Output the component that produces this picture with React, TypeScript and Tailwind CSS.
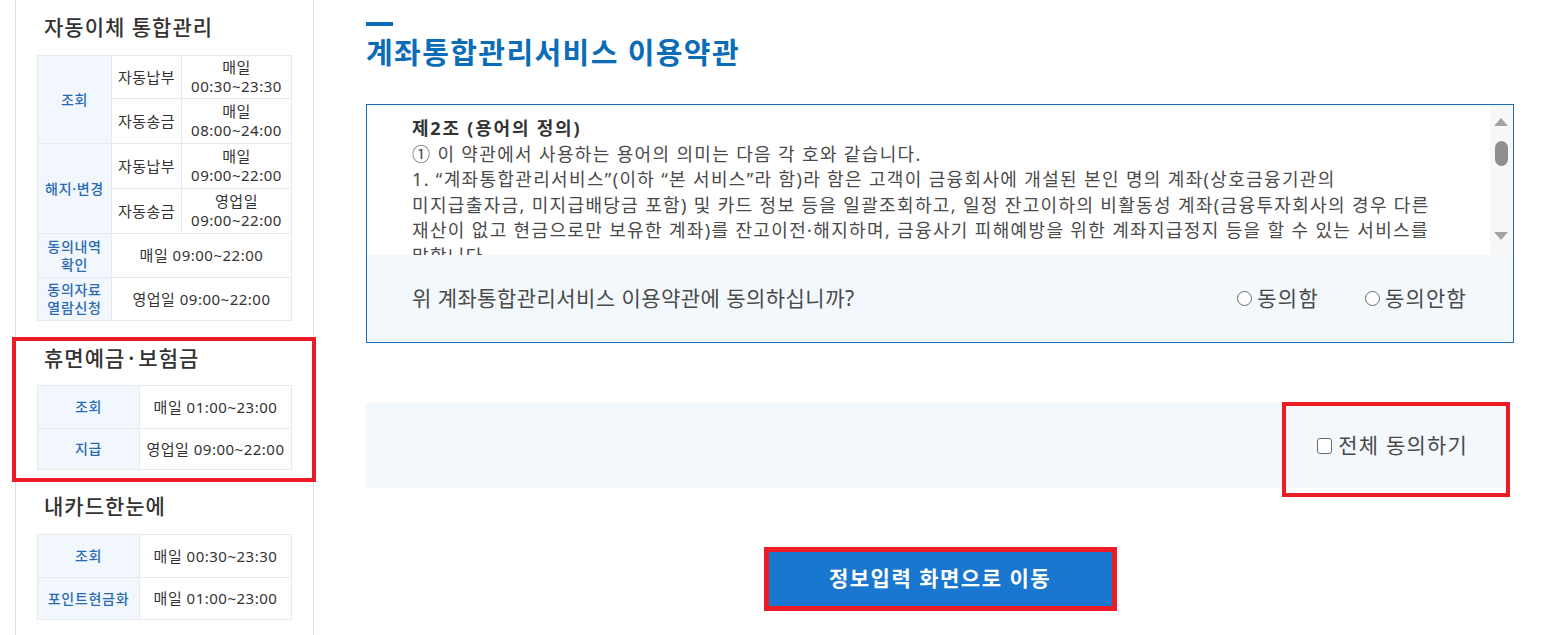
import React from "react";

const headCell =
  "border border-[#e6e9ee] bg-[#f1f7fd] text-[#2a6ab4] text-[14px] tracking-[0.7px] leading-[18px] font-medium text-center align-middle";
const valCell =
  "border border-[#e6e9ee] bg-white text-[#333] text-[15px] tracking-[0.5px] leading-[19px] text-center align-middle";

function SideTitle({ children }: { children: React.ReactNode }) {
  return (
    <h3 className="h-[28px] pl-[7px] text-[21px] leading-[28px] tracking-[1px] text-[#333] font-medium whitespace-nowrap">
      {children}
    </h3>
  );
}

function Sidebar() {
  return (
    <aside className="ml-[15px] w-[299px] shrink-0 border-x border-[#d9e1ea] pl-[21px] pr-[22px] pt-[13px] min-h-[635px]">
      <SideTitle>자동이체 통합관리</SideTitle>
      <table className="mt-[14px] w-[254px] border-collapse table-fixed">
        <colgroup>
          <col className="w-[74px]" />
          <col className="w-[70px]" />
          <col className="w-[110px]" />
        </colgroup>
        <tbody>
          <tr className="h-[43px]">
            <td rowSpan={2} className={headCell}>조회</td>
            <td className={valCell}>자동납부</td>
            <td className={valCell}>매일<br />00:30~23:30</td>
          </tr>
          <tr className="h-[45px]">
            <td className={valCell}>자동송금</td>
            <td className={valCell}>매일<br />08:00~24:00</td>
          </tr>
          <tr className="h-[45px]">
            <td rowSpan={2} className={headCell}>해지·변경</td>
            <td className={valCell}>자동납부</td>
            <td className={valCell}>매일<br />09:00~22:00</td>
          </tr>
          <tr className="h-[45px]">
            <td className={valCell}>자동송금</td>
            <td className={valCell}>영업일<br />09:00~22:00</td>
          </tr>
          <tr className="h-[44px]">
            <td className={headCell}>동의내역<br />확인</td>
            <td colSpan={2} className={valCell}>매일 09:00~22:00</td>
          </tr>
          <tr className="h-[43px]">
            <td className={headCell}>동의자료<br />열람신청</td>
            <td colSpan={2} className={valCell}>영업일 09:00~22:00</td>
          </tr>
        </tbody>
      </table>

      <div className="relative mt-[22px]">
        <SideTitle>
          휴면예금<span className="font-['Noto_Sans_CJK_KR',sans-serif]">·</span>보험금
        </SideTitle>
        <table className="mt-[14px] w-[254px] border-collapse table-fixed">
          <colgroup>
            <col className="w-[102px]" />
            <col className="w-[152px]" />
          </colgroup>
          <tbody>
            <tr className="h-[43px]">
              <td className={headCell}>조회</td>
              <td className={valCell}>매일 01:00~23:00</td>
            </tr>
            <tr className="h-[41px]">
              <td className={headCell}>지급</td>
              <td className={valCell}>영업일 09:00~22:00</td>
            </tr>
          </tbody>
        </table>
        <div className="pointer-events-none absolute -left-[25px] -right-[25px] -top-[6px] -bottom-[12px] border-[4px] border-[#ed1c24]" />
      </div>

      <div className="mt-[22px]">
        <SideTitle>내카드한눈에</SideTitle>
        <table className="mt-[14px] w-[254px] border-collapse table-fixed">
          <colgroup>
            <col className="w-[102px]" />
            <col className="w-[152px]" />
          </colgroup>
          <tbody>
            <tr className="h-[43px]">
              <td className={headCell}>조회</td>
              <td className={valCell}>매일 00:30~23:30</td>
            </tr>
            <tr className="h-[42px]">
              <td className={headCell}>포인트현금화</td>
              <td className={valCell}>매일 01:00~23:00</td>
            </tr>
          </tbody>
        </table>
      </div>
    </aside>
  );
}

function Radio({ label }: { label: string }) {
  return (
    <span className="flex items-center gap-[5px] whitespace-nowrap">
      <span className="inline-block h-[15px] w-[15px] rounded-full border border-[#6b6b6b] bg-white" />
      <span>{label}</span>
    </span>
  );
}

function Terms() {
  const lines = [
    "① 이 약관에서 사용하는 용어의 의미는 다음 각 호와 같습니다.",
    "1. “계좌통합관리서비스”(이하 “본 서비스”라 함)라 함은 고객이 금융회사에 개설된 본인 명의 계좌(상호금융기관의",
    "미지급출자금, 미지급배당금 포함) 및 카드 정보 등을 일괄조회하고, 일정 잔고이하의 비활동성 계좌(금융투자회사의 경우 다른",
    "재산이 없고 현금으로만 보유한 계좌)를 잔고이전·해지하며, 금융사기 피해예방을 위한 계좌지급정지 등을 할 수 있는 서비스를",
    "말합니다.",
  ];
  return (
    <div className="mt-[33px] h-[239px] border border-[#1a6fb8]">
      <div className="flex h-[150px] bg-white">
        <div className="flex-1 overflow-hidden pl-[45px] pt-[11px] text-[18px] leading-[25.5px] tracking-[1.35px] text-[#4a4a4a]">
          <p className="whitespace-nowrap font-bold tracking-[1.8px] text-[#333]">제2조 (용어의 정의)</p>
          {lines.map((l, i) => (
            <p key={i} className="whitespace-nowrap">
              {l}
            </p>
          ))}
        </div>
        <div className="relative w-[23px] bg-[#f8f8f8]">
          <svg className="absolute left-[4px] top-[13px]" width="14" height="8" viewBox="0 0 14 8">
            <polygon points="7,0 14,8 0,8" fill="#a3a3a3" />
          </svg>
          <div className="absolute left-[5px] top-[36px] h-[25px] w-[13px] rounded-full bg-[#8f8f8f]" />
          <svg className="absolute left-[4px] top-[127px]" width="14" height="8" viewBox="0 0 14 8">
            <polygon points="0,0 14,0 7,8" fill="#a3a3a3" />
          </svg>
        </div>
      </div>
      <div className="flex h-[87px] items-center bg-[#f2f8fc] pl-[45px] pr-[46px] text-[21px] text-[#4a4a4a]">
        <span className="whitespace-nowrap tracking-[0.45px]">위 계좌통합관리서비스 이용약관에 동의하십니까?</span>
        <div className="ml-auto flex items-center gap-[46px] tracking-[1.2px]">
          <Radio label="동의함" />
          <Radio label="동의안함" />
        </div>
      </div>
    </div>
  );
}

export default function App() {
  return (
    <div className="flex min-h-[635px] w-[1554px] bg-white font-['Noto_Sans','Noto_Sans_CJK_KR',sans-serif]">
      <Sidebar />
      <main className="ml-[52px] w-[1148px] shrink-0 pt-[22px]">
        <div className="h-[4px] w-[27px] bg-[#0b6cb8]" />
        <h2 className="mt-[9px] h-[36px] text-[29px] leading-[36px] tracking-[1.4px] font-bold text-[#0b6cb8] whitespace-nowrap">
          계좌통합관리서비스 이용약관
        </h2>
        <Terms />

        <div className="relative mt-[60px] flex h-[85px] w-[1144px] items-center justify-end bg-[#f2f8fc] pr-[42px]">
          <label className="flex items-center gap-[6px] text-[21px] tracking-[1.2px] text-[#4a4a4a] whitespace-nowrap">
            <span className="inline-block h-[16px] w-[15px] rounded-[3px] border border-[#6b6b6b] bg-white" />
            전체 동의하기
          </label>
          <div className="pointer-events-none absolute right-0 -top-[1px] -bottom-[9px] w-[228px] border-[4px] border-[#ed1c24]" />
        </div>

        <div className="relative mx-auto mt-[64px] h-[54px] w-[343px]">
          <button className="flex h-full w-full items-center justify-center bg-[#1a77cf] text-[21px] tracking-[1.5px] font-bold text-white">
            정보입력 화면으로 이동
          </button>
          <div className="pointer-events-none absolute -inset-[5px] border-[5px] border-[#ed1c24]" />
        </div>
      </main>
    </div>
  );
}
